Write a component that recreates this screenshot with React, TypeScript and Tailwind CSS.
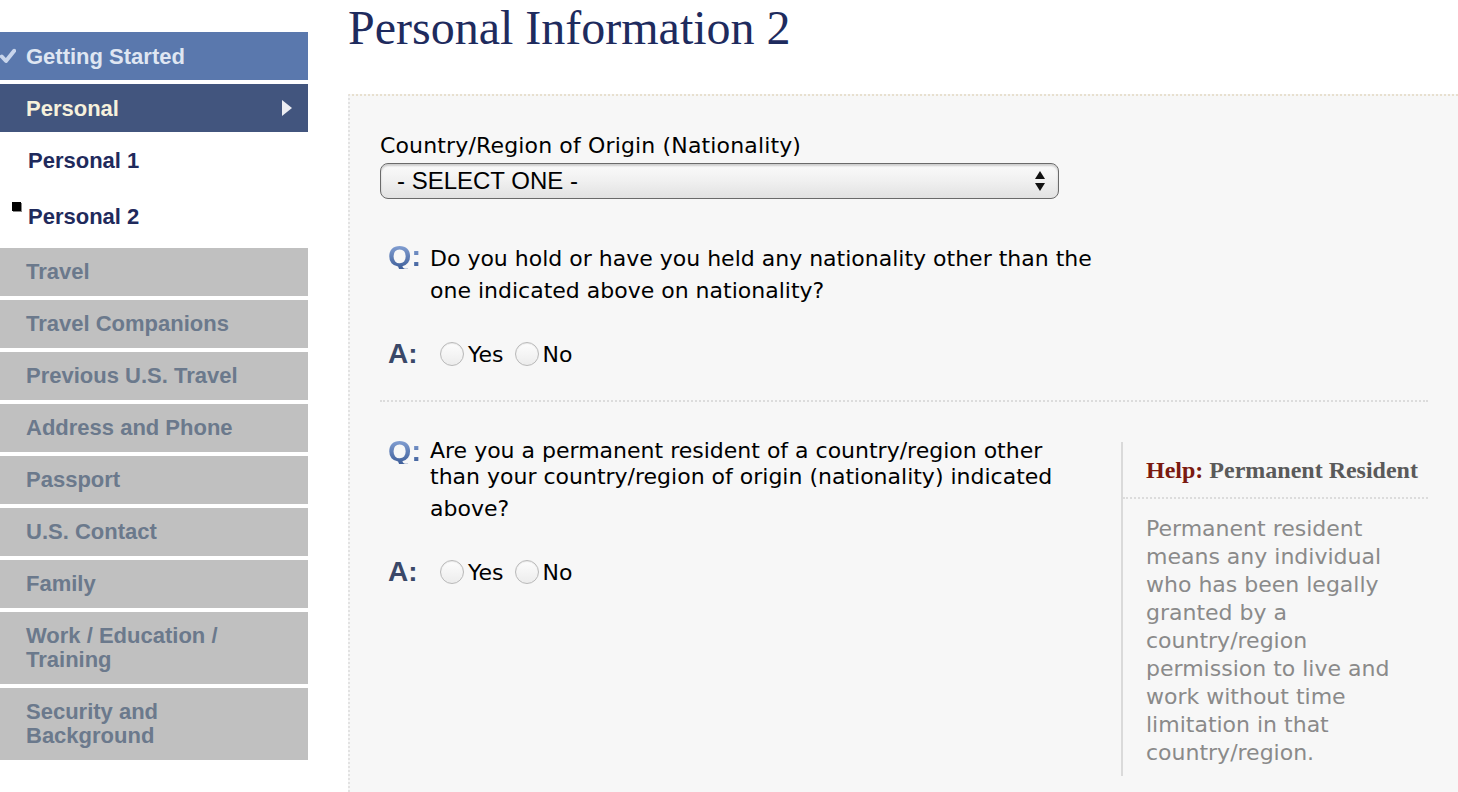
import React from "react";

const grayItems: { label: string[]; tall?: boolean }[] = [
  { label: ["Travel"] },
  { label: ["Travel Companions"] },
  { label: ["Previous U.S. Travel"] },
  { label: ["Address and Phone"] },
  { label: ["Passport"] },
  { label: ["U.S. Contact"] },
  { label: ["Family"] },
  { label: ["Work / Education /", "Training"], tall: true },
  { label: ["Security and", "Background"], tall: true },
];

const sans = { fontFamily: '"Liberation Sans", Arial, Helvetica, sans-serif' };
const verdana = { fontFamily: '"DejaVu Sans", Verdana, sans-serif' };
const serif = { fontFamily: '"Liberation Serif", "Times New Roman", serif' };

function Radio({ label }: { label: string }) {
  return (
    <span className="flex items-center">
      <span className="w-[24px] h-[24px] rounded-full border border-[#b9b9b9] bg-linear-to-b from-[#fdfdfd] to-[#ececec] shadow-[inset_0_1px_1px_rgba(0,0,0,0.08)]" />
      <span className="ml-[4px]">{label}</span>
    </span>
  );
}

function QMark() {
  return (
    <span
      className="w-[50px] shrink-0 pl-[8px] text-[30px] font-bold leading-[26px] bg-linear-to-b from-[#8aa6d8] to-[#3f5f9a] bg-clip-text text-transparent"
      style={sans}
    >
      Q:
    </span>
  );
}

function AMark() {
  return (
    <span
      className="w-[60px] shrink-0 pl-[8px] text-[28px] font-bold leading-[30px] text-[#3a4868]"
      style={sans}
    >
      A:
    </span>
  );
}

function Answer() {
  return (
    <div className="flex items-center h-[32px]">
      <AMark />
      <div className="flex items-center gap-[11px]">
        <Radio label="Yes" />
        <Radio label="No" />
      </div>
    </div>
  );
}

export default function App() {
  return (
    <div className="w-[1458px] h-[792px] overflow-hidden bg-white flex">
      {/* Sidebar */}
      <div className="w-[308px] shrink-0 pt-[32px] flex flex-col text-[22px] font-bold" style={sans}>
        <div className="relative h-[48px] bg-[#5a78ad] text-[#dfe6f2] flex items-center pl-[26px]">
          <svg className="absolute left-[0px] top-[16px]" width="16" height="16" viewBox="0 0 16 16">
            <path d="M1.8 8.5 L6 13 L14.2 2.8" fill="none" stroke="#c8d5ec" strokeWidth="4" strokeLinecap="round" strokeLinejoin="round" />
          </svg>
          Getting Started
        </div>
        <div className="relative mt-[4px] h-[48px] bg-[#42557e] text-[#f6f1dc] flex items-center pl-[26px]">
          Personal
          <svg className="absolute left-[282px] top-[16px]" width="10" height="16" viewBox="0 0 10 16">
            <path d="M0 0 L10 8 L0 16 Z" fill="#ecedf2" />
          </svg>
        </div>
        <div className="mt-[4px] h-[48px] flex items-center pl-[28px] text-[#1f2a5c]">Personal 1</div>
        <div className="relative mt-[8px] h-[48px] flex items-center pl-[28px] text-[#1f2a5c]">
          <span className="absolute left-[12px] top-[10px] w-[9px] h-[9px] bg-black shadow-[1px_1px_0_#888]" />
          Personal 2
        </div>
        <div className="mt-[8px] flex flex-col gap-[4px]">
          {grayItems.map((it) => (
            <div
              key={it.label.join(" ")}
              className={`${it.tall ? "h-[72px]" : "h-[48px]"} bg-[#c0c0c0] text-[#6b798c] flex flex-col justify-center pl-[26px] leading-[24px]`}
            >
              {it.label.map((l) => (
                <span key={l}>{l}</span>
              ))}
            </div>
          ))}
        </div>
      </div>

      {/* Main */}
      <div className="ml-[40px] flex-1 flex flex-col">
        <div className="h-[94px]">
          <h1 className="text-[48px] leading-[56px] text-[#1e2b5e]" style={serif}>
            Personal Information 2
          </h1>
        </div>
        <div
          className="flex-1 bg-[#f7f7f7] border-t-2 border-l-2 border-dotted border-t-[#e8e0cf] border-l-[#e2e2e2] pl-[30px] pr-[30px] pt-[37px] text-[22px] text-black whitespace-nowrap"
          style={verdana}
        >
          <div className="leading-[26px] tracking-[0.15px]">Country/Region of Origin (Nationality)</div>
          <div className="mt-[4px] w-[679px] h-[36px] rounded-[8px] border-[1.5px] border-[#6a6a6a] bg-linear-to-b from-[#fbfbfb] via-[#f0f0f0] to-[#e2e2e2] shadow-[inset_0_2px_2px_rgba(0,0,0,0.18)] flex items-center justify-between pl-[16px] pr-[12px]">
            <span className="text-[24px]" style={sans}>- SELECT ONE -</span>
            <svg width="12" height="22" viewBox="0 0 12 22">
              <path d="M6 1 L11 9 L1 9 Z" fill="#111" />
              <path d="M1 13 L11 13 L6 21 Z" fill="#111" />
            </svg>
          </div>

          {/* Q1 */}
          <div className="mt-[44px] flex items-start">
            <QMark />
            <div className="leading-[32px]">
              <div>Do you hold or have you held any nationality other than the</div>
              <div>one indicated above on nationality?</div>
            </div>
          </div>
          <div className="mt-[31px]">
            <Answer />
          </div>

          <div className="mt-[30px] border-t-2 border-dotted border-[#dcdcdc]" />

          {/* Q2 + Help */}
          <div className="flex">
            <div className="flex-1">
              <div className="mt-[36px] flex items-start">
                <QMark />
                <div>
                  <div className="leading-[26px]">Are you a permanent resident of a country/region other</div>
                  <div className="leading-[26px]">than your country/region of origin (nationality) indicated</div>
                  <div className="leading-[38px]">above?</div>
                </div>
              </div>
              <div className="mt-[28px]">
                <Answer />
              </div>
            </div>
            <div className="mt-[40px] w-[307px] h-[334px] border-l-2 border-[#dadada]">
              <div
                className="pl-[23px] pt-[14px] pb-[13px] text-[24px] font-bold leading-[28px] border-b-2 border-dotted border-[#dcdcdc]"
                style={serif}
              >
                <span className="text-[#7a1a10]">Help: </span>
                <span className="text-[#5a5a5a]">Permanent Resident</span>
              </div>
              <div className="pl-[23px] pt-[16px] leading-[28px] text-[#8a8a8a]">
                <div>Permanent resident</div>
                <div>means any individual</div>
                <div>who has been legally</div>
                <div>granted by a</div>
                <div>country/region</div>
                <div>permission to live and</div>
                <div>work without time</div>
                <div>limitation in that</div>
                <div>country/region.</div>
              </div>
            </div>
          </div>
        </div>
      </div>
    </div>
  );
}
